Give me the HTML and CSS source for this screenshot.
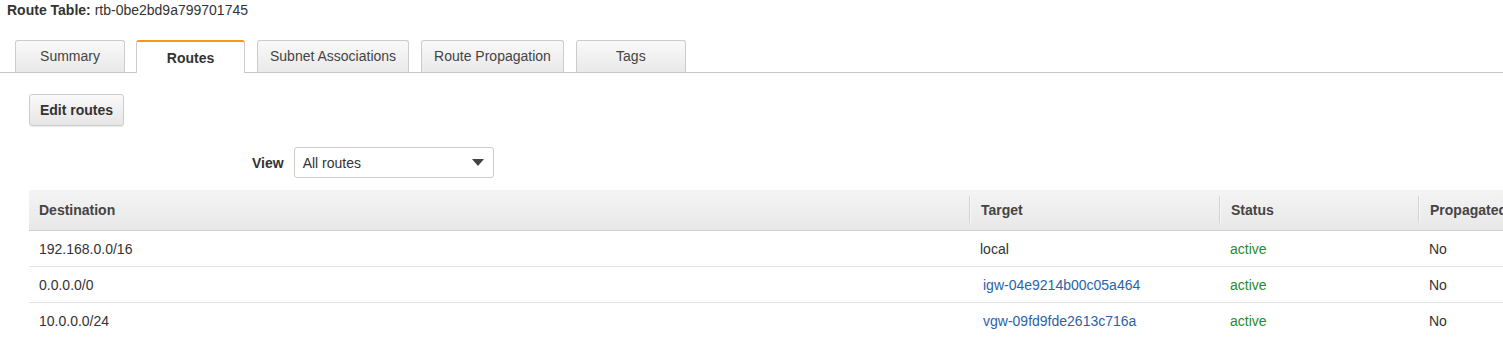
FILE: index.html
```html
<!DOCTYPE html>
<html lang="en">

<head>
    <meta charset="UTF-8">
    <title>Route Table</title>
    <link rel="stylesheet" href="styles.css">
</head>

<body>
    <div class="title"><b>Route Table:</b> rtb-0be2bd9a799701745</div>

    <div class="tabs">
        <div class="tab">Summary</div>
        <div class="tab active">Routes</div>
        <div class="tab">Subnet Associations</div>
        <div class="tab">Route Propagation</div>
        <div class="tab">Tags</div>
    </div>

    <div class="panel">
        <button class="btn">Edit routes</button>

        <div class="view-row">
            <span class="view-label">View</span>
            <div class="select">
                <span>All routes</span>
                <span class="caret"></span>
            </div>
        </div>

        <table class="routes">
            <colgroup>
                <col class="col-dest">
                <col class="col-target">
                <col class="col-status">
                <col class="col-prop">
            </colgroup>
            <thead>
                <tr>
                    <th>Destination</th>
                    <th>Target</th>
                    <th>Status</th>
                    <th>Propagated</th>
                </tr>
            </thead>
            <tbody>
                <tr>
                    <td>192.168.0.0/16</td>
                    <td>local</td>
                    <td class="active-status">active</td>
                    <td>No</td>
                </tr>
                <tr>
                    <td>0.0.0.0/0</td>
                    <td><a href="#">igw-04e9214b00c05a464</a></td>
                    <td class="active-status">active</td>
                    <td>No</td>
                </tr>
                <tr>
                    <td>10.0.0.0/24</td>
                    <td><a href="#">vgw-09fd9fde2613c716a</a></td>
                    <td class="active-status">active</td>
                    <td>No</td>
                </tr>
            </tbody>
        </table>
    </div>
</body>

</html>
```

FILE: styles.css
```css
body {
    font-family: "Liberation Sans", Arial, sans-serif;
    font-size: 14px;
    color: #333333;
    background-color: #ffffff;
    margin: 0;
    padding: 0;
    overflow: hidden;
}

.title {
    padding: 2px 7px 0;
    height: 18px;
    line-height: 16px;
    color: #333333;
}

.tabs {
    display: flex;
    gap: 12px;
    margin-top: 20px;
    padding-left: 15px;
    border-bottom: 1px solid #c6c6c6;
    height: 32px;
}

.tab {
    box-sizing: border-box;
    min-width: 110px;
    height: 32px;
    padding: 0 12px;
    line-height: 31px;
    text-align: center;
    color: #444444;
    border: 1px solid #cccccc;
    border-bottom: none;
    border-radius: 3px 3px 0 0;
    background: linear-gradient(#f9f9f9, #e9e9e9);
}

.tab.active {
    height: 33px;
    min-width: 109px;
    margin-left: -1px;
    font-weight: bold;
    color: #333333;
    background: #ffffff;
    border-top: 2px solid #f7981d;
    line-height: 33px;
}

.panel {
    padding-left: 29px;
}

.btn {
    display: block;
    margin-top: 21px;
    height: 32px;
    width: 95px;
    font-family: inherit;
    font-size: 14px;
    font-weight: bold;
    color: #333333;
    border: 1px solid #cccccc;
    border-radius: 3px;
    background: linear-gradient(#f9f9f9, #e6e6e6);
    box-shadow: 0 1px 1px rgba(0, 0, 0, 0.08);
}

.view-row {
    display: flex;
    align-items: center;
    gap: 10px;
    margin-top: 21px;
    padding-left: 223px;
}

.view-label {
    font-weight: bold;
    color: #333333;
}

.select {
    box-sizing: border-box;
    display: flex;
    align-items: center;
    justify-content: space-between;
    width: 200px;
    height: 31px;
    padding: 0 9px 0 8px;
    border: 1px solid #cccccc;
    border-radius: 3px;
    color: #333333;
}

.caret {
    width: 0;
    height: 0;
    border-left: 6px solid transparent;
    border-right: 6px solid transparent;
    border-top: 7px solid #444444;
}

.routes {
    margin-top: 12px;
    width: 1600px;
    border-collapse: collapse;
    table-layout: fixed;
}

.col-dest {
    width: 940px;
}

.col-target {
    width: 250px;
}

.col-status {
    width: 199px;
}

.col-prop {
    width: 211px;
}

.routes th {
    position: relative;
    height: 40px;
    padding: 0 12px;
    text-align: left;
    font-weight: bold;
    color: #444444;
    background: linear-gradient(#f4f4f4, #e8e8e8);
    border-bottom: 1px solid #cfcfcf;
}

.routes th:first-child {
    padding-left: 10px;
}

.routes th + th::before {
    content: "";
    position: absolute;
    left: 0;
    top: 6px;
    bottom: 7px;
    border-left: 1px solid #d2d2d2;
    box-shadow: 1px 0 0 #f8f8f8;
}

.routes td {
    height: 35px;
    padding: 0 11px;
    border-bottom: 1px solid #e4e4e4;
    color: #333333;
}

.routes td:first-child {
    padding-left: 10px;
}

.routes tbody tr:last-child td {
    border-bottom: none;
}

.routes td a {
    color: #2a63a8;
    text-decoration: none;
    padding-left: 3px;
}

.routes td.active-status {
    color: #2b8a2b;
}
```
